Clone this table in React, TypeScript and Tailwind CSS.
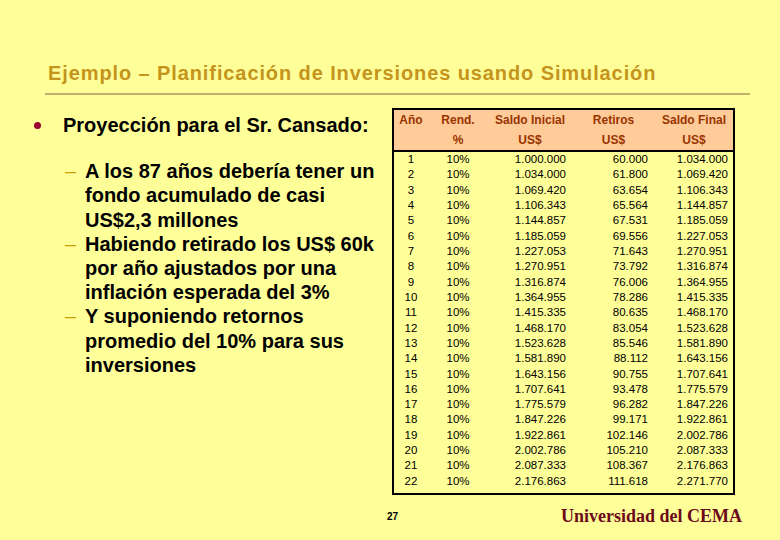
import React from "react";

const rows: [number, string, string, string][] = [
  [1, "1.000.000", "60.000", "1.034.000"],
  [2, "1.034.000", "61.800", "1.069.420"],
  [3, "1.069.420", "63.654", "1.106.343"],
  [4, "1.106.343", "65.564", "1.144.857"],
  [5, "1.144.857", "67.531", "1.185.059"],
  [6, "1.185.059", "69.556", "1.227.053"],
  [7, "1.227.053", "71.643", "1.270.951"],
  [8, "1.270.951", "73.792", "1.316.874"],
  [9, "1.316.874", "76.006", "1.364.955"],
  [10, "1.364.955", "78.286", "1.415.335"],
  [11, "1.415.335", "80.635", "1.468.170"],
  [12, "1.468.170", "83.054", "1.523.628"],
  [13, "1.523.628", "85.546", "1.581.890"],
  [14, "1.581.890", "88.112", "1.643.156"],
  [15, "1.643.156", "90.755", "1.707.641"],
  [16, "1.707.641", "93.478", "1.775.579"],
  [17, "1.775.579", "96.282", "1.847.226"],
  [18, "1.847.226", "99.171", "1.922.861"],
  [19, "1.922.861", "102.146", "2.002.786"],
  [20, "2.002.786", "105.210", "2.087.333"],
  [21, "2.087.333", "108.367", "2.176.863"],
  [22, "2.176.863", "111.618", "2.271.770"],
];

const cols = "grid grid-cols-[34px_60px_84px_83px_78px]";

function SubItem({ lines }: { lines: string[] }) {
  return (
    <div className="flex">
      <div className="w-[20px] shrink-0 text-[#c8a000] font-normal">–</div>
      <div>
        {lines.map((l, i) => (
          <div key={i} className="whitespace-nowrap">
            {l}
          </div>
        ))}
      </div>
    </div>
  );
}

export default function App() {
  return (
    <div
      className="w-[780px] h-[540px] bg-[#ffff99] flex flex-col overflow-hidden"
      style={{ fontFamily: '"Liberation Sans", Arial, sans-serif' }}
    >
      <div className="pt-[61px] pl-[48px] text-[20px] leading-[24px] tracking-[0.9px] font-bold text-[#c4941c] whitespace-nowrap">
        Ejemplo – Planificación de Inversiones usando Simulación
      </div>
      <div className="mt-[8px] ml-[45px] w-[705px] h-[2px] bg-[#c2b06a]" />

      <div className="mt-[13px] flex">
        <div className="w-[392px] shrink-0 pt-[5px] text-[20px] leading-[24.2px] font-bold text-black">
          <div className="flex items-center pl-[34px]">
            <div className="w-[29px] shrink-0 flex items-center">
              <div className="w-[7px] h-[7px] rounded-full bg-[#990033]" />
            </div>
            <div className="whitespace-nowrap">Proyección para el Sr. Cansado:</div>
          </div>
          <div className="mt-[22px] pl-[65px] flex flex-col">
            <SubItem
              lines={[
                "A los 87 años debería tener un",
                "fondo acumulado de casi",
                "US$2,3 millones",
              ]}
            />
            <SubItem
              lines={[
                "Habiendo retirado los US$ 60k",
                "por año ajustados por una",
                "inflación esperada del 3%",
              ]}
            />
            <SubItem
              lines={[
                "Y suponiendo retornos",
                "promedio del 10% para sus",
                "inversiones",
              ]}
            />
          </div>
        </div>

        <div className="w-[343px] border-2 border-black bg-[#ffff99]">
          <div className="bg-[#ffcc99] border-b-2 border-black text-[12px] font-bold text-[#993300]">
            <div className={`${cols} h-[20px] items-center text-center`}>
              <div>Año</div>
              <div>Rend.</div>
              <div>Saldo Inicial</div>
              <div>Retiros</div>
              <div>Saldo Final</div>
            </div>
            <div className={`${cols} h-[20px] items-center text-center`}>
              <div></div>
              <div>%</div>
              <div>US$</div>
              <div>US$</div>
              <div>US$</div>
            </div>
          </div>
          <div className="pb-[4px] text-[11.5px] text-black">
            {rows.map(([n, a, b, c]) => (
              <div key={n} className={`${cols} h-[15.32px] items-center leading-[15px]`}>
                <div className="text-center">{n}</div>
                <div className="text-center">10%</div>
                <div className="text-right pr-[6px]">{a}</div>
                <div className="text-right pr-[7px]">{b}</div>
                <div className="text-right pr-[5px]">{c}</div>
              </div>
            ))}
          </div>
        </div>
      </div>

      <div className="mt-[12px] ml-[387px] w-[355px] flex items-center justify-between h-[20px]">
        <div className="text-[10px] font-bold text-black">27</div>
        <div
          className="text-[18px] font-bold text-[#6b0a1a] whitespace-nowrap"
          style={{ fontFamily: '"Liberation Serif", "Times New Roman", serif' }}
        >
          Universidad del CEMA
        </div>
      </div>
    </div>
  );
}
